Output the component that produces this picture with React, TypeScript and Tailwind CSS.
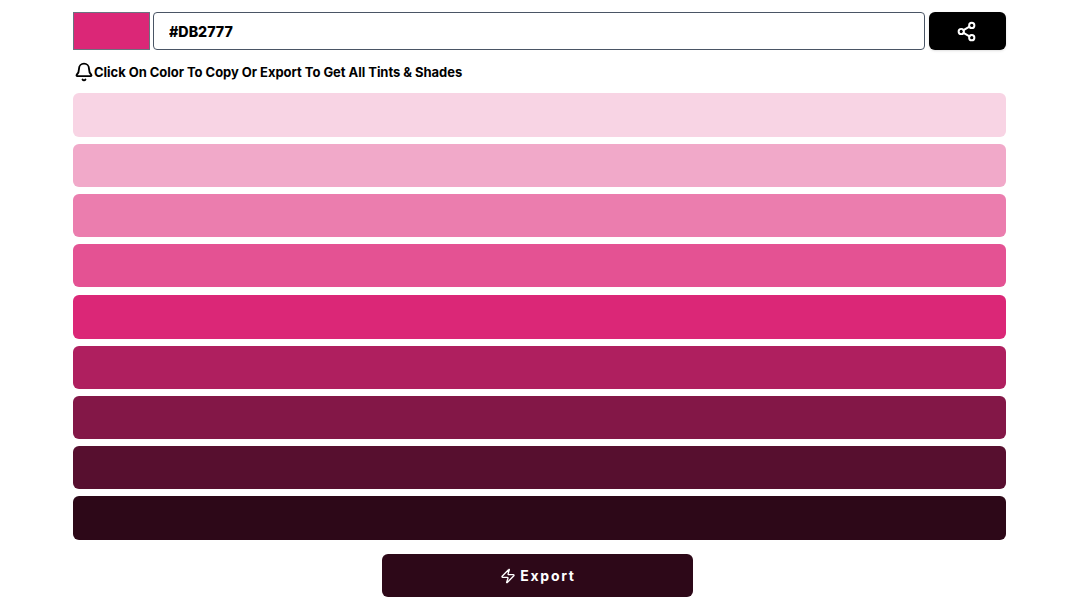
import { Bell, Share2, Zap } from 'lucide-react'

const shades = [
    { id: 1, cls: 'mb-[7px] h-[44px] bg-[#F8D4E4]' },
    { id: 2, cls: 'mb-[7px] h-[43px] bg-[#F1A9C9]' },
    { id: 3, cls: 'mb-[7px] h-[43px] bg-[#EB7DAE]' },
    { id: 4, cls: 'mb-[8px] h-[43px] bg-[#E45293]' },
    { id: 5, cls: 'mb-[7px] h-[44px] bg-[#DB2777]' },
    { id: 6, cls: 'mb-[7px] h-[43px] bg-[#AF1F5F]' },
    { id: 7, cls: 'mb-[7px] h-[43px] bg-[#831747]' },
    { id: 8, cls: 'mb-[7px] h-[43px] bg-[#570F2F]' },
    { id: 9, cls: 'h-[44px] bg-[#2D0818]' },
]

// ------------------top row: swatch, hex input, share------------------
function ColorInput() {
    return (
        <div className="flex h-[38px] items-stretch">
            <div className="w-[77px] border border-[#6b7280] bg-[#DB2777]" />
            <input
                readOnly
                value="#DB2777"
                className="ml-[3px] w-[772px] rounded border border-gray-600 bg-white pl-[15px] pt-[1px] text-[14.25px] font-extrabold text-black outline-none"
            />
            <button
                type="button"
                className="ml-[4px] flex w-[77px] items-center justify-center rounded-md bg-black pr-[2px] text-white shadow-sm"
            >
                <Share2 size={21} strokeWidth={2.25} />
            </button>
        </div>
    )
}

export default function App() {
    return (
        <div className="h-[597px] w-[1072px] overflow-hidden bg-white font-['Inter',sans-serif]">
            <div className="ml-[73px] w-[933px] pt-[12px]">
                <ColorInput />

                <div className="mt-[12px] flex h-[20px] items-center pl-[1px]">
                    <Bell size={20} strokeWidth={2.25} className="text-black" />
                    <p className="mt-[1px] text-[13px] font-bold tracking-[-0.04px] text-black">
                        Click On Color To Copy Or Export To Get All Tints &amp; Shades
                    </p>
                </div>

                {/* tints and shades */}
                <div className="mt-[11px] flex flex-col">
                    {shades.map(({ id, cls }) => (
                        <div key={id} className={`${cls} rounded-md`} />
                    ))}
                </div>

                <div className="mt-[14px] flex justify-center pr-[4px]">
                    <button
                        type="button"
                        className="flex h-[43px] w-[311px] items-center justify-center gap-[4px] rounded-md bg-[#2D0818] pl-[1px] text-[14px] font-bold tracking-[1.7px] text-white"
                    >
                        <Zap size={16} strokeWidth={2} />
                        Export
                    </button>
                </div>
            </div>
        </div>
    )
}
